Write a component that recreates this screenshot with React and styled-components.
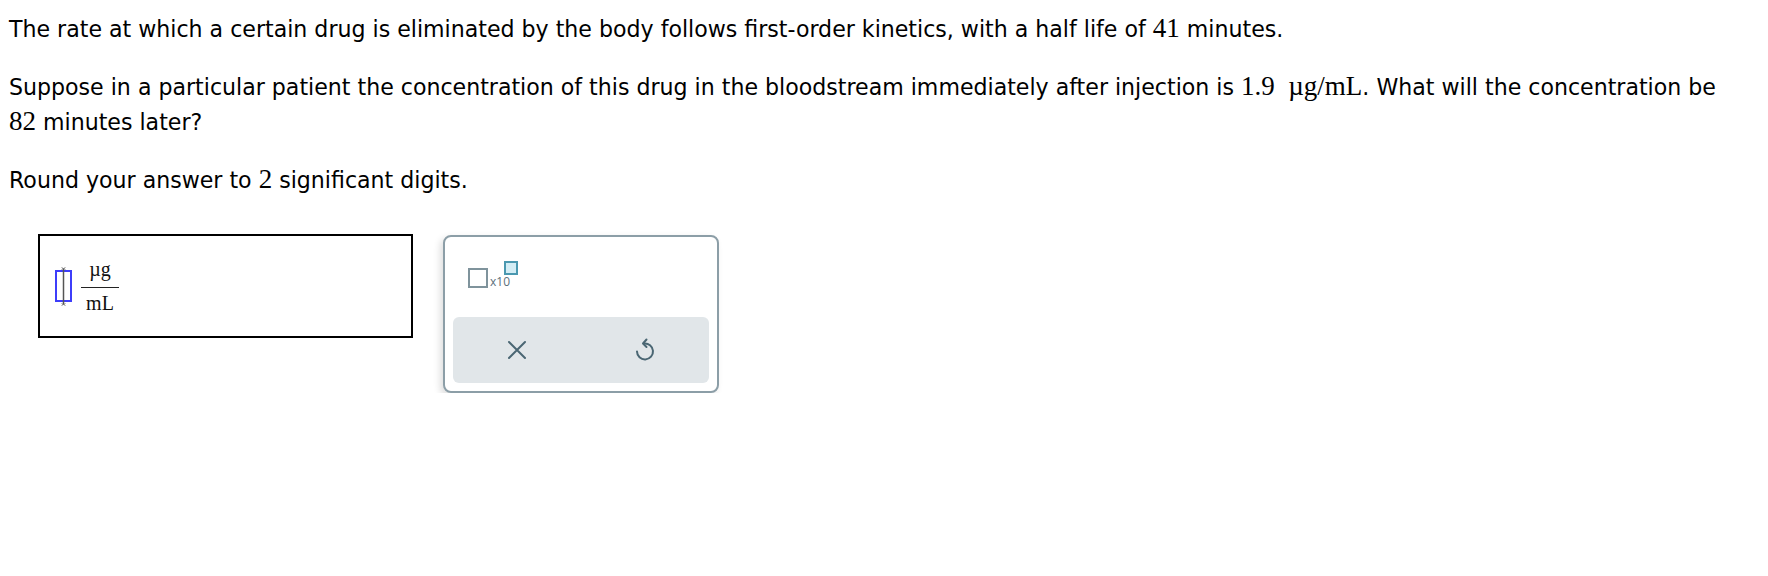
import styled, { createGlobalStyle } from "styled-components";

const GlobalStyle = createGlobalStyle`
  body {
    margin: 0;
    background: #ffffff;
  }
`;

const Page = styled.div`
  padding: 12px 30px 0 9px;
  font-family: "DejaVu Sans", Verdana, sans-serif;
  font-size: 22.1px;
  color: #000;
`;

const Para = styled.p`
  margin: 0 0 23px;
  line-height: 35px;
`;

const Num = styled.span`
  font-family: "Liberation Serif", "Times New Roman", serif;
  font-size: 27px;
  line-height: 1;
`;

const Row = styled.div`
  display: flex;
  align-items: flex-start;
  gap: 30px;
  margin-top: 36px;
  padding-left: 29px;
`;

const AnswerBox = styled.div`
  box-sizing: border-box;
  width: 375px;
  height: 104px;
  border: 2px solid #000;
  display: flex;
  align-items: center;
  padding-left: 15px;
`;

const Fraction = styled.div`
  display: flex;
  flex-direction: column;
  align-items: center;
  width: 38px;
  margin-left: 8px;
  font-family: "Liberation Serif", "Times New Roman", serif;
  font-size: 20px;
  color: #111;
`;

const Numer = styled.span`
  line-height: 24px;
  padding-bottom: 6px;
`;

const Bar = styled.span`
  align-self: stretch;
  height: 1.5px;
  background: #222;
`;

const Denom = styled.span`
  line-height: 24px;
  padding-top: 3px;
`;

const Panel = styled.div`
  box-sizing: border-box;
  width: 276px;
  border: 2px solid #8c9ea7;
  border-radius: 8px;
  padding: 8px;
  margin-top: 1px;
  background: #fff;
  box-shadow: -3px 3px 7px rgba(0, 0, 0, 0.13);
`;

const Tools = styled.div`
  height: 72px;
  padding: 16px 0 0 15px;
  box-sizing: border-box;
`;

const ExpButton = styled.div`
  display: inline-flex;
  align-items: flex-end;
`;

const BaseSquare = styled.span`
  box-sizing: border-box;
  width: 20px;
  height: 20px;
  border: 2px solid #7f939c;
`;

const Exp = styled.span`
  display: flex;
  flex-direction: column;
  width: 28px;
  margin-left: 2px;
`;

const SupSquare = styled.span`
  box-sizing: border-box;
  align-self: flex-end;
  width: 14px;
  height: 14px;
  border: 2px solid #4a98b0;
  background: #d3edf5;
`;

const ExpLabel = styled.span`
  font-family: "Open Sans", "Noto Sans", sans-serif;
  font-size: 12px;
  line-height: 12px;
  margin-top: 1px;
  color: #5a707b;
`;

const ActionBar = styled.div`
  display: flex;
  height: 66px;
  border-radius: 6px;
  background: #e1e6e9;
`;

const ActionButton = styled.button`
  flex: 1;
  display: flex;
  align-items: center;
  justify-content: center;
  border: none;
  background: transparent;
  padding: 0;
  cursor: pointer;
`;

const CursorIcon = () => (
  <svg width="18" height="39" viewBox="0 0 18 39" style={{ flexShrink: 0 }}>
    <rect x="1" y="4" width="15" height="30" fill="none" stroke="#3d3dfa" strokeWidth="2" />
    <line x1="8.5" y1="1" x2="8.5" y2="38" stroke="#555" strokeWidth="1.5" />
    <path d="M6.5 0.5 L10.5 2.5 M10.5 0.5 L6.5 2.5 M6.5 36.5 L10.5 38.5 M10.5 36.5 L6.5 38.5" stroke="#777" strokeWidth="0.8" />
  </svg>
);

const CloseIcon = () => (
  <svg width="20" height="20" viewBox="0 0 20 20">
    <path d="M2 2 L18 18 M18 2 L2 18" stroke="#4a6673" strokeWidth="2" strokeLinecap="round" />
  </svg>
);

const UndoIcon = () => (
  <svg width="24" height="26" viewBox="0 0 24 26">
    <path
      d="M11 6.5 A8 8 0 1 1 4 14.5"
      fill="none"
      stroke="#4a6673"
      strokeWidth="2"
      strokeLinecap="round"
    />
    <path d="M13.5 2.5 L10 6.5 L13.5 10" fill="none" stroke="#4a6673" strokeWidth="2" strokeLinecap="round" strokeLinejoin="round" />
  </svg>
);

export default function App() {
  return (
    <Page>
      <GlobalStyle />
      <Para>
        The rate at which a certain drug is eliminated by the body follows first-order kinetics,
        with a half life of <Num>41</Num> minutes.
      </Para>
      <Para>
        Suppose in a particular patient the concentration of this drug in the bloodstream
        immediately after injection is <Num>1.9&nbsp; µg/mL</Num>. What will the concentration be{" "}
        <Num>82</Num> minutes later?
      </Para>
      <Para>
        Round your answer to <Num>2</Num> significant digits.
      </Para>

      <Row>
        <AnswerBox>
          <CursorIcon />
          <Fraction>
            <Numer>µg</Numer>
            <Bar />
            <Denom>mL</Denom>
          </Fraction>
        </AnswerBox>

        <Panel>
          <Tools>
            <ExpButton>
              <BaseSquare />
              <Exp>
                <SupSquare />
                <ExpLabel>x10</ExpLabel>
              </Exp>
            </ExpButton>
          </Tools>
          <ActionBar>
            <ActionButton aria-label="clear">
              <CloseIcon />
            </ActionButton>
            <ActionButton aria-label="undo">
              <UndoIcon />
            </ActionButton>
          </ActionBar>
        </Panel>
      </Row>
    </Page>
  );
}
